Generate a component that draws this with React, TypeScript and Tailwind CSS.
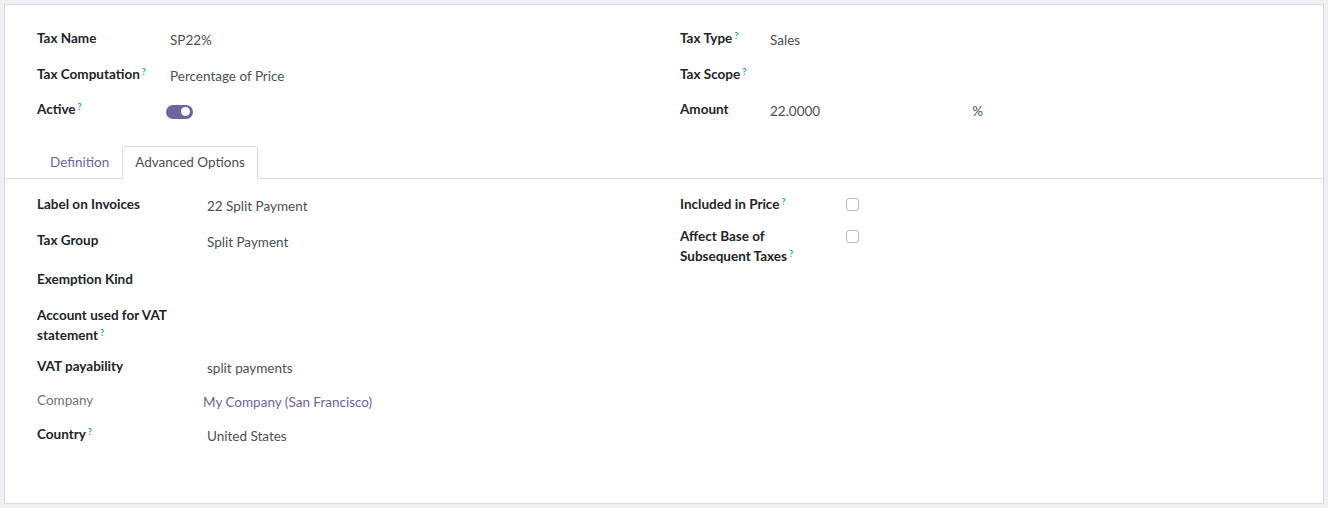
import { ReactNode } from 'react';

const Help = () => <sup className="ml-0.5 text-[9px] font-bold text-[#1d9bc7]">?</sup>;

function Field({
  label,
  children,
  labelWidth,
  help,
  muted,
  className = '',
}: {
  label: ReactNode;
  children?: ReactNode;
  labelWidth: string;
  help?: boolean;
  muted?: boolean;
  className?: string;
}) {
  return (
    <div className={`flex items-start ${className}`}>
      <div className={`${labelWidth} shrink-0 leading-5 ${muted ? 'font-normal text-[#6c757d]' : 'font-bold text-[#212529]'}`}>
        {label}
        {help && <Help />}
      </div>
      <div className="pt-0.5 leading-5 text-[#495057]">{children}</div>
    </div>
  );
}

function Toggle() {
  return (
    <span className="-ml-1 -mt-0.5 inline-flex h-[14px] w-[27px] items-center justify-end rounded-full bg-[#71639e] pr-[3px]">
      <span className="h-[9px] w-[9px] rounded-full bg-white" />
    </span>
  );
}

function Checkbox() {
  return <span className="block h-[13px] w-[13px] rounded-[3px] border border-[#b6b9bd] bg-white" />;
}

export default function App() {
  return (
    <div className="min-h-screen bg-[#eef0f3] p-1 text-[13.5px]" style={{ fontFamily: 'Lato, "Noto Sans", sans-serif' }}>
      <div className="h-[500px] border border-[#d8dbdf] bg-white">
        <div className="grid grid-cols-2 gap-x-8 px-8 pt-[23px]">
          <div className="flex flex-col gap-[14px]">
            <Field label="Tax Name" labelWidth="w-[133px]">SP22%</Field>
            <Field label="Tax Computation" labelWidth="w-[133px]" help>Percentage of Price</Field>
            <Field label="Active" labelWidth="w-[133px]" help className="-mt-px">
              <Toggle />
            </Field>
          </div>
          <div className="flex flex-col gap-[14px]">
            <Field label="Tax Type" labelWidth="w-[90px]" help>Sales</Field>
            <Field label="Tax Scope" labelWidth="w-[90px]" help>
              <span className="block h-5" />
            </Field>
            <Field label="Amount" labelWidth="w-[90px]" className="-mt-px">
              <div className="flex w-[213px] justify-between">
                <span>22.0000</span>
                <span>%</span>
              </div>
            </Field>
          </div>
        </div>

        <div className="mt-[25px] flex border-b border-[#d8dbdf] px-8">
          <div className="px-[13px] pb-[6px] pt-[6px] leading-5 text-[#71639e]">Definition</div>
          <div className="-mb-px rounded-t-[4px] border border-b-white border-[#d8dbdf] px-3 pb-[6px] pt-[5px] leading-5 text-[#495057]">
            Advanced Options
          </div>
        </div>

        <div className="grid grid-cols-2 gap-x-8 px-8 pt-[15px]">
          <div className="flex flex-col">
            <Field label="Label on Invoices" labelWidth="w-[170px]" className="pb-[14px]">22 Split Payment</Field>
            <Field label="Tax Group" labelWidth="w-[170px]" className="pb-[17px]">Split Payment</Field>
            <Field label="Exemption Kind" labelWidth="w-[170px]" className="pb-[16px]" />
            <Field label={<>Account used for VAT<br />statement</>} labelWidth="w-[170px]" help className="pb-[11px]" />
            <Field label="VAT payability" labelWidth="w-[170px]" className="pb-[12px]">split payments</Field>
            <Field label="Company" labelWidth="w-[170px]" muted className="pb-[12px]">
              <span className="-ml-1 text-[#71639e]">My Company (San Francisco)</span>
            </Field>
            <Field label="Country" labelWidth="w-[170px]" help>United States</Field>
          </div>
          <div className="flex flex-col gap-3">
            <div className="flex items-start">
              <div className="w-[166px] shrink-0 font-bold leading-5 text-[#212529]">
                Included in Price<Help />
              </div>
              <div className="pt-1"><Checkbox /></div>
            </div>
            <div className="flex items-start">
              <div className="w-[166px] shrink-0 font-bold leading-5 text-[#212529]">
                Affect Base of<br />Subsequent Taxes<Help />
              </div>
              <div className="pt-1"><Checkbox /></div>
            </div>
          </div>
        </div>
      </div>
    </div>
  );
}
